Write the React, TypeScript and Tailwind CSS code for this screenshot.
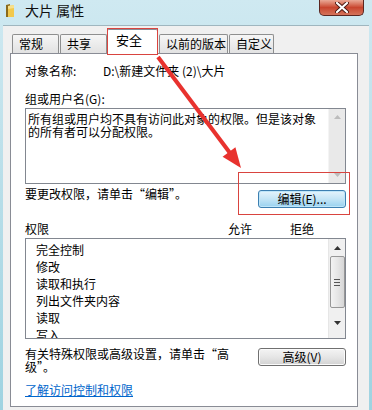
import React from 'react';

const font = { fontFamily: '"Noto Sans CJK SC", "Liberation Sans", sans-serif' };

function FolderIcon() {
  return (
    <svg width="10" height="15" viewBox="0 0 10 15">
      <path d="M1 2 L5 1 L5 14 L1 14 Z" fill="#8a6a1c" />
      <path d="M3 3 L9 2 L9 14 L3 14 Z" fill="#f2c94c" />
      <path d="M3 3 L9 2 L9 5 L3 6 Z" fill="#f8e08a" />
    </svg>
  );
}

function CloseButton() {
  return (
    <div className="w-[45px] h-[16px] rounded-b-[5px] border border-t-0 border-[#5b2620] bg-gradient-to-b from-[#e9a996] via-[#c8452e] to-[#d4735a] flex items-center justify-center">
      <svg width="14" height="11" viewBox="0 0 14 11">
        <path d="M2 1 L12 10 M12 1 L2 10" stroke="#4a1a14" strokeWidth="4" strokeLinecap="round" />
        <path d="M2 1 L12 10 M12 1 L2 10" stroke="#ffffff" strokeWidth="2.2" strokeLinecap="round" />
      </svg>
    </div>
  );
}

function UpArrow({ color }: { color: string }) {
  return (
    <svg width="7" height="4" viewBox="0 0 7 4">
      <path d="M0 4 L3.5 0 L7 4 Z" fill={color} />
    </svg>
  );
}

function DownArrow({ color }: { color: string }) {
  return (
    <svg width="7" height="4" viewBox="0 0 7 4">
      <path d="M0 0 L3.5 4 L7 0 Z" fill={color} />
    </svg>
  );
}

function Tab({ label, w, selected }: { label: string; w: string; selected?: boolean }) {
  if (selected) {
    return (
      <div
        className={`${w} h-[25px] -mb-[1px] relative z-10 bg-white border border-b-0 border-[#898c95] rounded-t-[2px] pl-[8px] pt-[1px] text-[13px] leading-[18px]`}
      >
        {label}
      </div>
    );
  }
  return (
    <div
      className={`${w} h-[19px] border border-b-0 border-[#8e8f8f] rounded-t-[2px] bg-gradient-to-b from-[#f6f6f6] to-[#e2e2e2] pl-[6px] text-[12px] leading-[17px]`}
    >
      {label}
    </div>
  );
}

const perms = ['完全控制', '修改', '读取和执行', '列出文件夹内容', '读取', '写入'];

export default function App() {
  return (
    <div
      className="relative w-[372px] h-[410px] overflow-hidden flex flex-col bg-gradient-to-b from-[#cfe9f1] via-[#b6dde8] to-[#9fd3e1] text-black"
      style={font}
    >
      {/* title bar */}
      <div className="h-[25px] flex items-start shrink-0">
        <div className="pt-[3px] pl-[5px]">
          <FolderIcon />
        </div>
        <div className="ml-[10px] pt-[2px] text-[14px] leading-[17px] text-[#111]">大片 属性</div>
        <div className="ml-auto mr-[8px]">
          <CloseButton />
        </div>
      </div>

      {/* dialog body */}
      <div className="flex-1 mx-[3px] bg-[#f0f0f0] border-t border-[#9fb6bf] flex flex-col">
        <div className="flex items-end pl-[9px] pt-[2px] h-[27px]">
          <Tab label="常规" w="w-[47px]" />
          <div className="ml-[1px]">
            <Tab label="共享" w="w-[47px]" />
          </div>
          <Tab label="安全" w="w-[51px]" selected />
          <div className="ml-[1px]">
            <Tab label="以前的版本" w="w-[69px]" />
          </div>
          <div className="ml-[1px]">
            <Tab label="自定义" w="w-[45px]" />
          </div>
        </div>

        <div className="ml-[7px] mr-[11px] h-[354px] bg-white border border-[#898c95] pl-[14px] pr-[11px] text-[12px] flex flex-col">
          <div className="mt-[9px] h-[16px] leading-[16px] flex">
            <span className="w-[78px]">对象名称:</span>
            <span>{'D:\\新建文件夹  (2)\\大片'}</span>
          </div>
          <div className="mt-[12px] h-[16px] leading-[16px]">组或用户名(G):</div>

          <div className="mt-[1px] h-[76px] border border-[#828790] flex">
            <div className="flex-1 pl-[2px] pt-[3px] text-[12px] leading-[13px]">
              所有组或用户均不具有访问此对象的权限。但是该对象
              <br />
              的所有者可以分配权限。
            </div>
            <div className="w-[17px] bg-[#e9e9e9] border-l border-[#f4f4f4] flex flex-col items-center justify-between py-[6px]">
              <UpArrow color="#bcbcbc" />
              <DownArrow color="#bcbcbc" />
            </div>
          </div>

          <div className="mt-[2px] flex items-start justify-between">
            <div className="h-[16px] leading-[16px]">要更改权限，请单击“编辑”。</div>
            <div className="mt-[4px] w-[88px] h-[18px] rounded-[3px] border border-[#3c7fb1] bg-gradient-to-b from-[#e5f4fc] via-[#c4e5f6] to-[#98d1ef] shadow-[inset_0_0_0_1px_#bfe6f9] flex items-center justify-center text-[12px] leading-[16px]">
              编辑(E)...
            </div>
          </div>

          <div className="mt-[13px] h-[16px] leading-[16px] flex">
            <span className="w-[203px]">权限</span>
            <span className="w-[62px]">允许</span>
            <span>拒绝</span>
          </div>

          <div className="mt-[1px] h-[101px] border border-[#828790] flex overflow-hidden">
            <div className="flex-1 pl-[10px] pt-[2px]">
              {perms.map((p) => (
                <div key={p} className="h-[17px] leading-[17px]">
                  {p}
                </div>
              ))}
            </div>
            <div className="w-[17px] bg-[#f0f0f0] border-l border-[#e6e6e6] flex flex-col items-center">
              <div className="h-[17px] flex items-center justify-center">
                <UpArrow color="#333" />
              </div>
              <div className="w-[15px] h-[52px] rounded-[2px] border border-[#979797] bg-gradient-to-r from-[#f3f3f3] via-[#e6e6e6] to-[#d6d6d6] flex flex-col items-center justify-center gap-[2px]">
                <div className="w-[6px] h-px bg-[#555]" />
                <div className="w-[6px] h-px bg-[#555]" />
                <div className="w-[6px] h-px bg-[#555]" />
              </div>
              <div className="flex-1 flex items-center justify-center">
                <DownArrow color="#333" />
              </div>
            </div>
          </div>

          <div className="mt-[8px] flex items-start justify-between">
            <div className="leading-[13px] text-[12px]">
              有关特殊权限或高级设置，请单击“高
              <br />
              级”。
            </div>
            <div className="mt-[1px] w-[88px] h-[18px] rounded-[3px] border border-[#707070] bg-gradient-to-b from-[#f4f4f4] via-[#e6e6e6] to-[#d2d2d2] shadow-[inset_0_0_0_1px_#fbfbfb] flex items-center justify-center text-[12px] leading-[16px]">
              高级(V)
            </div>
          </div>

          <div className="mt-[9px] h-[16px] leading-[16px] text-[#0066cc] underline">了解访问控制和权限</div>
        </div>
      </div>

      {/* annotations */}
      <div className="absolute left-[107px] top-[28px] w-[51px] h-[27px] border border-[#d9443f] pointer-events-none z-20" />
      <div className="absolute left-[238px] top-[172px] w-[112px] h-[43px] border border-[#d9443f] pointer-events-none z-20" />
      <svg className="absolute left-0 top-0 pointer-events-none z-30" width="372" height="410">
        <line x1="158" y1="57" x2="230" y2="153" stroke="#e8322e" strokeWidth="4" />
        <path d="M241 168 L222.6 156.8 L235.4 147.2 Z" fill="#e8322e" />
      </svg>
    </div>
  );
}
